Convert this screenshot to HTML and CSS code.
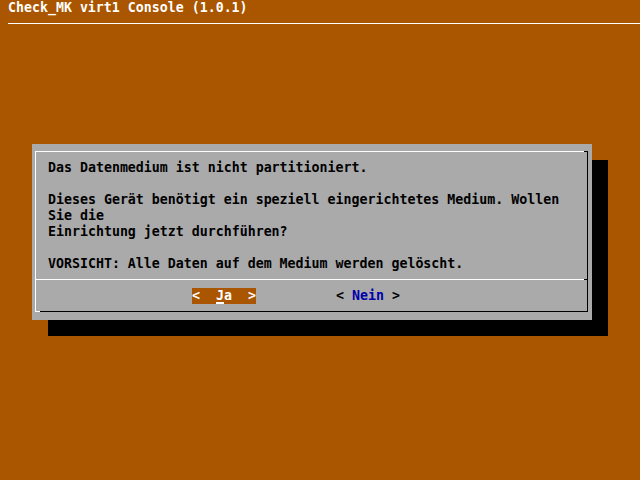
FILE: index.html
```html
<!DOCTYPE html>
<html>
<head>
<meta charset="utf-8">
<link rel="stylesheet" href="styles.css">
</head>
<body>
<div class="screen">
  <div class="title">Check_MK virt1 Console (1.0.1)</div>
  <div class="rule"></div>
  <div class="dialog">
    <div class="frame">
      <div class="text">
        <div class="row">Das Datenmedium ist nicht partitioniert.</div>
        <div class="row"> </div>
        <div class="row">Dieses Gerät benötigt ein speziell eingerichtetes Medium. Wollen</div>
        <div class="row">Sie die</div>
        <div class="row">Einrichtung jetzt durchführen?</div>
        <div class="row"> </div>
        <div class="row">VORSICHT: Alle Daten auf dem Medium werden gelöscht.</div>
      </div>
      <div class="sep"></div>
      <div class="buttons">
        <div class="btn btn-active">&lt;  <span class="cursor">J</span>a  &gt;</div>
        <div class="btn btn-normal">&lt; <span class="label">Nein</span> &gt;</div>
      </div>
    </div>
  </div>
</div>
</body>
</html>
```
FILE: styles.css
```css
html, body {
  margin: 0;
  padding: 0;
  background: #aa5500;
}
.screen {
  width: 640px;
  height: 480px;
  overflow: hidden;
  background: #aa5500;
  font-family: "DejaVu Sans Mono", "Liberation Mono", monospace;
  font-weight: bold;
  font-size: 13.288px;
  line-height: 16px;
}
.title {
  height: 16px;
  padding-left: 8px;
  color: #ffffff;
  white-space: pre;
}
.rule {
  height: 1px;
  margin: 7px 0 0 8px;
  background: #ffffff;
}
.dialog {
  box-sizing: border-box;
  width: 560px;
  height: 176px;
  margin: 120px 0 0 32px;
  padding: 7px 4px 8px 3px;
  background: #aaaaaa;
  box-shadow: 16px 16px 0 0 #000000;
}
.frame {
  position: relative;
  box-sizing: border-box;
  width: 553px;
  height: 161px;
  border-style: solid;
  border-width: 1px;
  border-color: #ffffff #000000 #000000 #ffffff;
}
.frame::before {
  content: "";
  position: absolute;
  top: -1px;
  right: -1px;
  width: 4px;
  height: 1px;
  background: #000000;
}
.frame::after {
  content: "";
  position: absolute;
  bottom: -1px;
  left: -1px;
  width: 5px;
  height: 1px;
  background: #ffffff;
}
.text {
  padding: 8px 0 0 12px;
  color: #000000;
}
.row {
  height: 16px;
  white-space: pre;
}
.sep {
  height: 1px;
  margin-top: 7px;
  background: linear-gradient(to right, #ffffff calc(100% - 3px), #000000 calc(100% - 3px));
}
.buttons {
  display: flex;
  gap: 80px;
  margin-top: 8px;
  padding-left: 156px;
  height: 16px;
}
.btn {
  width: 64px;
  height: 16px;
  white-space: pre;
}
.btn-active {
  background: #aa5500;
  color: #ffffff;
}
.btn-normal {
  color: #000000;
}
.btn-normal .label {
  color: #0000aa;
}
.cursor {
  position: relative;
}
.cursor::after {
  content: "";
  position: absolute;
  left: 0;
  top: 14px;
  width: 8px;
  height: 2px;
  background: #ffffff;
}
```
